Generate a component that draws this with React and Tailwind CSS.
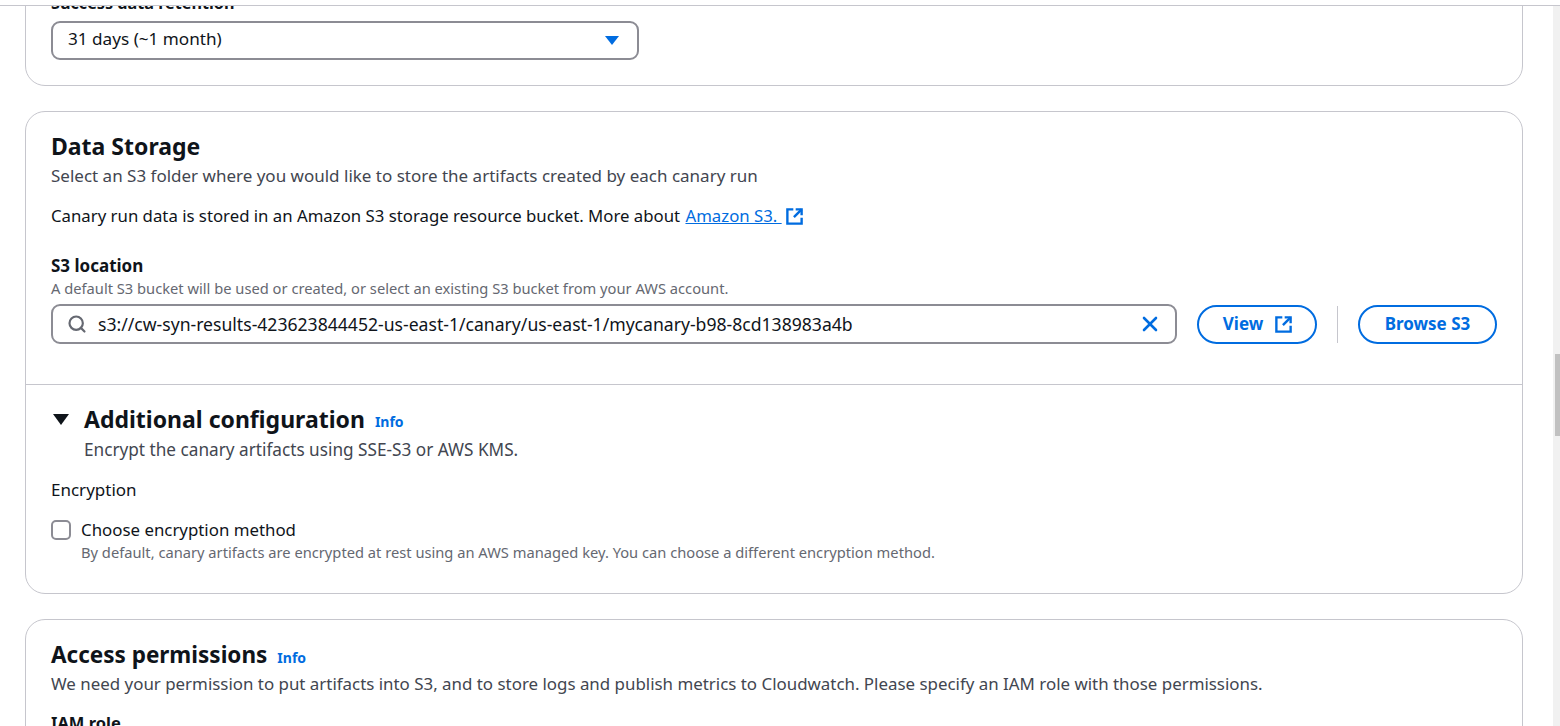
import { Search, X } from "lucide-react";

const font = "font-['Noto_Sans','Open_Sans',sans-serif]";

function ExternalIcon({ className }) {
  return (
    <svg viewBox="0 0 16 16" fill="none" stroke="currentColor" strokeWidth="2" className={className}>
      <path d="M7 2H2v12h12V9" />
      <path d="M9 2h5v5" />
      <path d="M14 2 7.5 8.5" />
    </svg>
  );
}

function Info() {
  return <span className="text-[14px] font-bold leading-none text-[#006ce0]">Info</span>;
}

export default function App() {
  return (
    <div className={`${font} flex h-screen flex-col overflow-hidden bg-white text-[17px] text-[#0f141a]`}>
      <div className="relative z-10 h-[6px] shrink-0 border-b border-[#c6c6cd] bg-white" />
      <div className="flex min-h-0 flex-1">
        <main className="min-w-0 flex-1 pl-[25px] pr-[30px]">
          <section className="mt-[-30px] h-[110px] rounded-b-[20px] border border-[#c6c6cd] px-[25px] pt-[15px]">
            <p className="text-[16.2px] font-bold leading-[22px]">Success data retention</p>
            <div className="mt-[7px] flex h-[39px] w-[588px] items-center justify-between rounded-[9px] border-2 border-[#8c8c94] pl-[15px] pr-[18px]">
              <span className="mb-[4px] text-[17.15px]">31 days (~1 month)</span>
              <span className="h-0 w-0 border-x-[7px] border-t-[9px] border-x-transparent border-t-[#006ce0]" />
            </div>
          </section>

          <section className="mt-[25px] h-[483px] rounded-[20px] border border-[#c6c6cd]">
            <div className="h-[273px] border-b border-[#c6c6cd] px-[25px] pt-[18px]">
              <h2 className="text-[23px] font-bold leading-[32px]">Data Storage</h2>
              <p className="mt-[2px] leading-[24px] text-[#424650]">Select an S3 folder where you would like to store the artifacts created by each canary run</p>
              <p className="mt-[16px] flex items-center text-[16.78px] leading-[24px]">
                Canary run data is stored in an Amazon S3 storage resource bucket. More about&nbsp;
                <a className="ml-[1px] flex items-center text-[#006ce0] underline">Amazon S3.&nbsp;</a>
                <ExternalIcon className="ml-[3px] h-[19px] w-[19px] text-[#006ce0]" />
              </p>
              <p className="mt-[27px] font-bold leading-[22px]">S3 location</p>
              <p className="mt-[1px] text-[14.7px] leading-[20px] text-[#656871]">A default S3 bucket will be used or created, or select an existing S3 bucket from your AWS account.</p>
              <div className="mt-[6px] flex items-center">
                <div className="flex h-[40px] w-[1126px] items-center rounded-[9px] border-2 border-[#8c8c94] pl-[14px] pr-[13px]">
                  <Search size={20} strokeWidth={2.6} className="text-[#656871]" />
                  <span className="ml-[11px] flex-1 text-[17.6px]">s3://cw-syn-results-423623844452-us-east-1/canary/us-east-1/mycanary-b98-8cd138983a4b</span>
                  <X size={24} strokeWidth={2.6} className="text-[#006ce0]" />
                </div>
                <button className="ml-[20px] flex h-[39px] w-[120px] items-center justify-center gap-[11px] rounded-full border-2 border-[#006ce0] pl-[2px] font-bold text-[#006ce0]">
                  View
                  <ExternalIcon className="h-[19px] w-[19px]" />
                </button>
                <span className="ml-[20px] h-[37px] w-px bg-[#c6c6cd]" />
                <button className="ml-[20px] flex h-[39px] w-[139px] items-center justify-center rounded-full border-2 border-[#006ce0] font-bold text-[#006ce0]">
                  Browse S3
                </button>
              </div>
            </div>
            <div className="px-[25px] pt-[18px]">
              <div className="flex items-center">
                <span className="ml-[2px] h-0 w-0 border-x-[8px] border-t-[11px] border-x-transparent border-t-[#0f141a]" />
                <h3 className="ml-[15px] text-[23px] font-bold leading-[32px]">Additional configuration</h3>
                <span className="ml-[10px] mt-[4px]"><Info /></span>
              </div>
              <p className="ml-[33px] mt-[3px] text-[17.2px] leading-[24px] text-[#424650]">Encrypt the canary artifacts using SSE-S3 or AWS KMS.</p>
              <p className="mt-[16px] leading-[24px]">Encryption</p>
              <div className="mt-[16px] flex items-center">
                <span className="h-[20px] w-[20px] rounded-[5px] border-2 border-[#8c8c94]" />
                <span className="ml-[10px] text-[16.85px] leading-[24px]">Choose encryption method</span>
              </div>
              <p className="ml-[30px] text-[14.7px] leading-[20px] text-[#656871]">By default, canary artifacts are encrypted at rest using an AWS managed key. You can choose a different encryption method.</p>
            </div>
          </section>

          <section className="mt-[25px] rounded-t-[20px] border border-[#c6c6cd] px-[25px] pb-[40px] pt-[19px]">
            <div className="flex items-center">
              <h2 className="text-[22.5px] font-bold leading-[32px]">Access permissions</h2>
              <span className="ml-[10px] mt-[4px]"><Info /></span>
            </div>
            <p className="mt-[1px] text-[16.9px] leading-[24px] text-[#424650]">We need your permission to put artifacts into S3, and to store logs and publish metrics to Cloudwatch. Please specify an IAM role with those permissions.</p>
            <p className="mt-[16px] text-[16.5px] font-bold leading-[22px]">IAM role</p>
          </section>
        </main>
        <aside className="w-[7px] shrink-0 bg-[#f1f1f1] pt-[348px]">
          <div className="ml-[2px] h-[82px] w-[5px] bg-[#c1c1c1]" />
        </aside>
      </div>
    </div>
  );
}
